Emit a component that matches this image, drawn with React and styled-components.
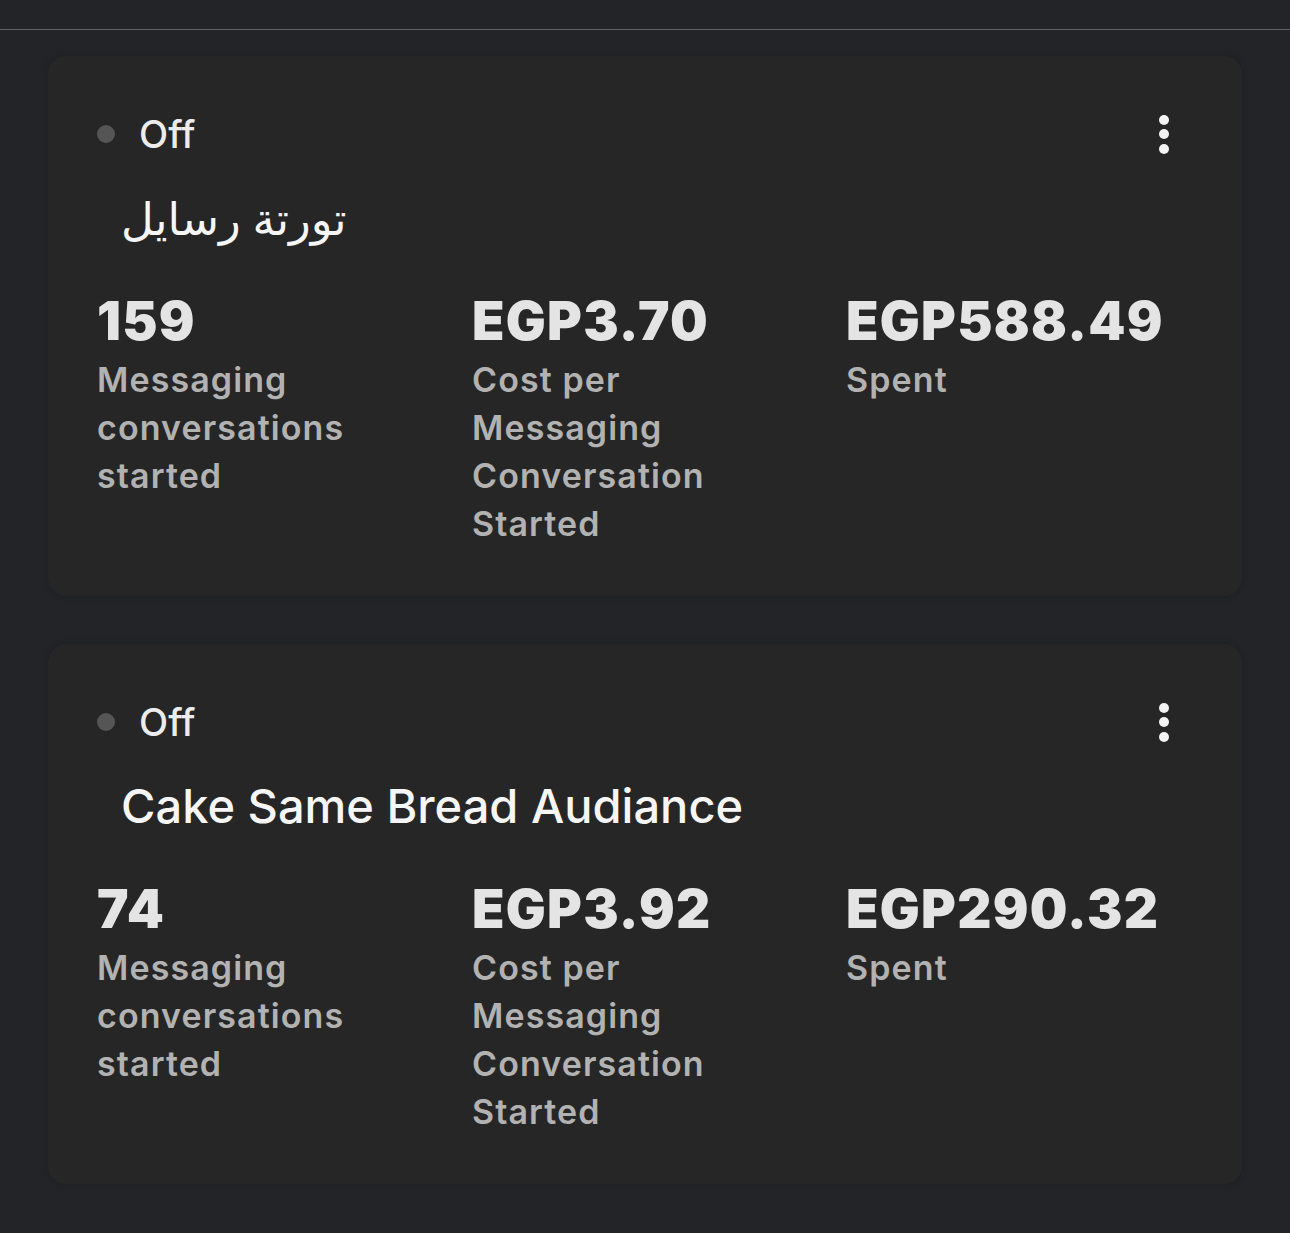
import React from 'react'
import styled, { createGlobalStyle } from 'styled-components'

const GlobalStyle = createGlobalStyle`
    html, body {
        margin: 0;
        padding: 0;
        background-color: #232427;
    }
    body {
        font-family: Inter, "Noto Sans", "Liberation Sans", sans-serif;
        -webkit-font-smoothing: antialiased;
    }
`

//Styled Components
const Page = styled.div`
    min-height: 1233px;
    background-color: #232427;
`

const TopBar = styled.div`
    height: 29px;
    border-bottom: 1px solid #5f6063;
`

const List = styled.div`
    display: flex;
    flex-direction: column;
    gap: 48px;
    padding: 26px 48px 0 48px;
`

const Card = styled.div`
    background-color: #262626;
    border-radius: 18px;
    height: 540px;
    box-sizing: border-box;
    padding: 54px 49px 0 48px;
    box-shadow: 0 0 6px rgba(0, 0, 0, 0.15);
`

const StatusRow = styled.div`
    display: flex;
    align-items: center;
    height: 48px;
`

const Dot = styled.span`
    width: 18px;
    height: 18px;
    border-radius: 50%;
    background-color: ${props => props.active ? '#3fbf6a' : '#555555'};
    margin-left: 1px;
    margin-right: 24px;
`

const StatusText = styled.span`
    font-size: 38px;
    font-weight: 500;
    color: #ececec;
`

const MenuButton = styled.button`
    margin-left: auto;
    margin-right: 24px;
    background: none;
    border: none;
    padding: 0;
    display: flex;
    flex-direction: column;
    gap: 4.5px;
    cursor: pointer;
    span {
        width: 10px;
        height: 10px;
        border-radius: 50%;
        background-color: #f4f4f4;
    }
`

const Title = styled.div`
    margin: 30px 0 0 25px;
    height: 60px;
    line-height: 60px;
    font-size: ${props => props.arabic ? '45px' : '47px'};
    font-weight: 500;
    color: #f6f6f6;
    font-family: ${props => props.arabic ? '"Noto Sans", "DejaVu Sans", sans-serif' : 'Inter, "Noto Sans", sans-serif'};
    unicode-bidi: plaintext;
    text-align: left;
`

const Stats = styled.div`
    display: grid;
    grid-template-columns: 375px 374px 1fr;
    margin-top: 43px;
    padding-left: 1px;
`

const Stat = styled.div`
    display: flex;
    flex-direction: column;
`

const Value = styled.div`
    font-size: 53px;
    line-height: 60px;
    font-weight: 900;
    color: #e4e4e4;
    letter-spacing: 1.3px;
`

const Label = styled.div`
    margin-top: 5px;
    font-size: 34px;
    line-height: 48px;
    font-weight: 600;
    color: #b2b2b2;
    letter-spacing: 1.1px;
    max-width: 270px;
`

const campaigns = [
    {
        status: 'Off',
        name: 'تورتة رسايل',
        arabic: true,
        results: '159',
        cost: 'EGP3.70',
        spent: 'EGP588.49',
    },
    {
        status: 'Off',
        name: 'Cake Same Bread Audiance',
        arabic: false,
        results: '74',
        cost: 'EGP3.92',
        spent: 'EGP290.32',
    },
]

//Campaign Card Component
const CampaignCard = ({ campaign }) => {
    return (
        <Card>
            <StatusRow>
                <Dot />
                <StatusText>{campaign.status}</StatusText>
                <MenuButton aria-label="More options">
                    <span />
                    <span />
                    <span />
                </MenuButton>
            </StatusRow>

            <Title arabic={campaign.arabic} dir="auto">{campaign.name}</Title>

            <Stats>
                <Stat>
                    <Value>{campaign.results}</Value>
                    <Label>Messaging conversations started</Label>
                </Stat>
                <Stat>
                    <Value>{campaign.cost}</Value>
                    <Label>Cost per Messaging Conversation Started</Label>
                </Stat>
                <Stat>
                    <Value>{campaign.spent}</Value>
                    <Label>Spent</Label>
                </Stat>
            </Stats>
        </Card>
    )
}

const App = () => {
    return (
        <Page>
            <GlobalStyle />
            <TopBar />
            <List>
                {campaigns.map((c, i) => (
                    <CampaignCard key={i} campaign={c} />
                ))}
            </List>
        </Page>
    )
}

export default App
